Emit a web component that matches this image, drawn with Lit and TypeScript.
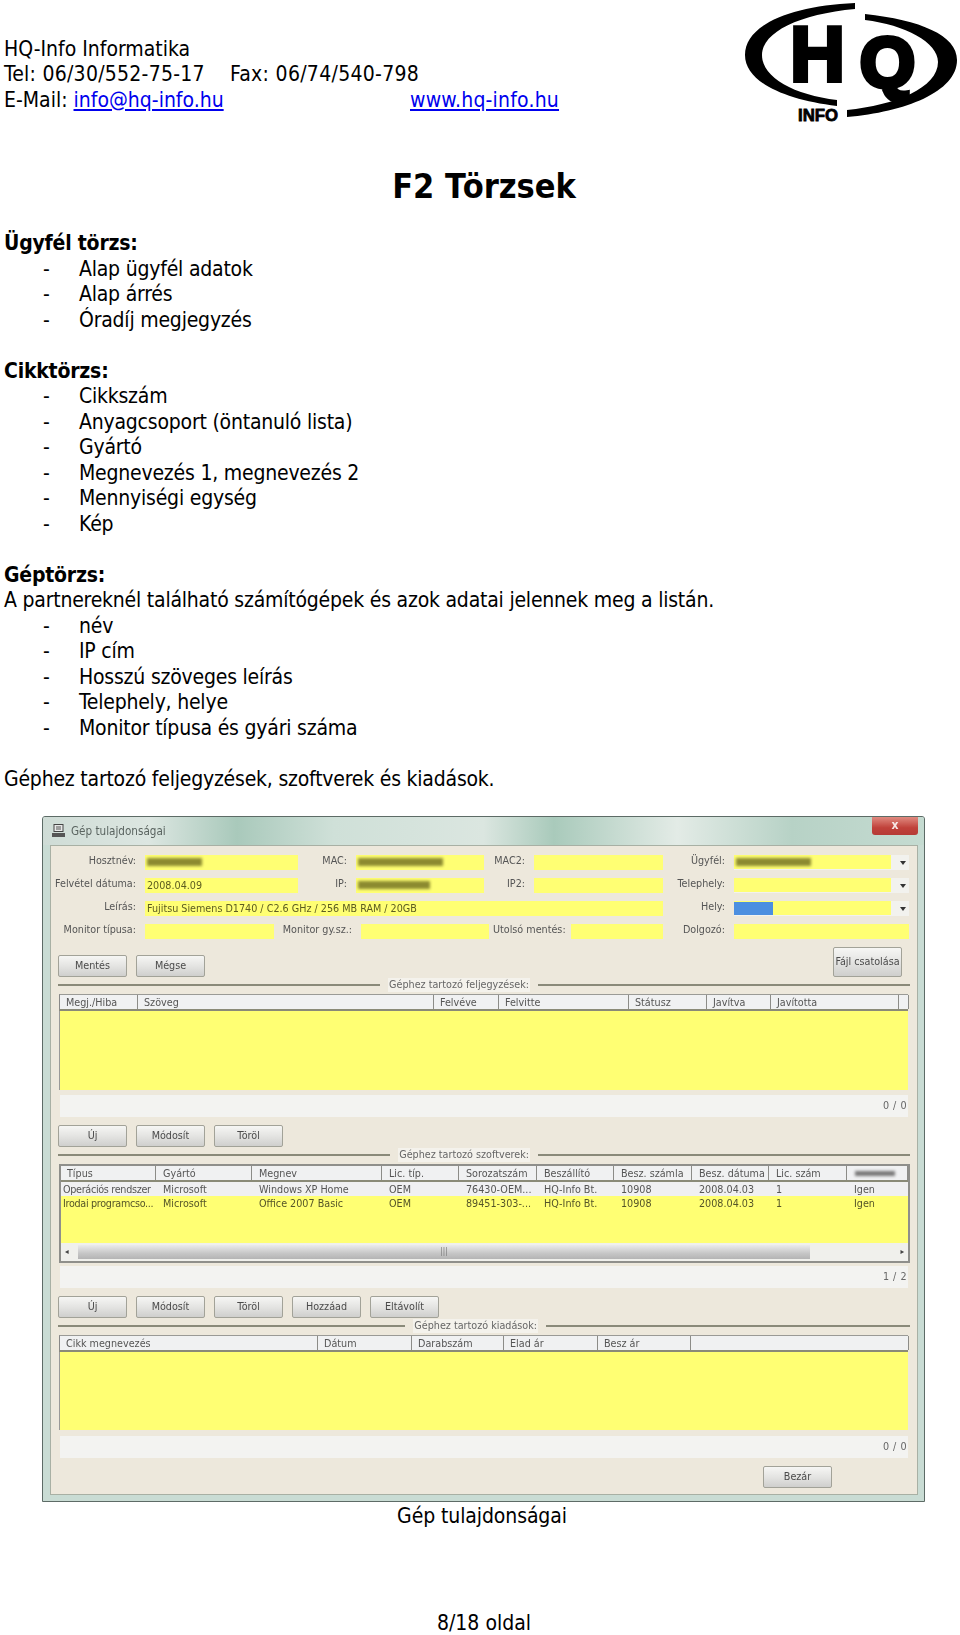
import { LitElement, html, css, nothing } from "lit";
import { customElement } from "lit/decorators.js";

const T1 = { widths: [78, 296, 65, 130, 78, 64, 128, 10], heads: ["Megj./Hiba", "Szöveg", "Felvéve", "Felvitte", "Státusz", "Javítva", "Javította", ""] };
const T2 = {
  widths: [95, 96, 130, 77, 78, 77, 78, 77, 78, 61],
  heads: ["Típus", "Gyártó", "Megnev", "Lic. típ.", "Sorozatszám", "Beszállító", "Besz. számla", "Besz. dátuma", "Lic. szám", ""],
  rows: [
    ["Operációs rendszer", "Microsoft", "Windows XP Home", "OEM", "76430-OEM...", "HQ-Info Bt.", "10908", "2008.04.03", "1", "Igen"],
    ["Irodai programcso...", "Microsoft", "Office 2007 Basic", "OEM", "89451-303-...", "HQ-Info Bt.", "10908", "2008.04.03", "1", "Igen"],
  ],
};
const T3 = { widths: [258, 94, 92, 94, 93, 218], heads: ["Cikk megnevezés", "Dátum", "Darabszám", "Elad ár", "Besz ár", ""] };

@customElement("app-root")
export class AppRoot extends LitElement {
  static styles = css`
    :host { display: block; width: 960px; height: 1635px; background: #fff; overflow: hidden;
      font-family: "DejaVu Sans Condensed", "DejaVu Sans", sans-serif; font-stretch: condensed; color: #000;
      font-size: 21px; line-height: 25.5px; }
    .head { display: flex; justify-content: space-between; align-items: flex-start; height: 124px; }
    .contact { padding: 36.5px 0 0 4px; }
    .cl { display: flex; white-space: pre; }
    .c1 { width: 226px; letter-spacing: .25px; }
    .c2 { width: 406px; }
    .num { letter-spacing: .3px; }
    a { color: #0000ee; text-decoration: underline; }
    .www { letter-spacing: .2px; }
    .logo { display: block; width: 215px; height: 122px; margin: 2px 1px 0 0; }
    h1 { margin: 42px 0 25px; padding-left: 8px; text-align: center; font-size: 34px; line-height: 40px; font-weight: 700; }
    .doc { padding-left: 4px; letter-spacing: -.21px; }
    .blank { height: 25.5px; }
    b { font-weight: 700; display: block; }
    .li { display: flex; padding-left: 39px; }
    .li span:first-child { width: 36px; }
    .win { box-sizing: border-box; margin: 24px 0 0 42px; width: 883px; height: 686px; display: flex; flex-direction: column;
      background: #c9dcd4; border: 1px solid #5d6b66; border-radius: 3px 3px 0 0; position: relative; filter: blur(0.6px); overflow: hidden;
      font-size: 10.7px; line-height: 14px; color: #555; }
    .title { height: 28px; flex: none; display: flex; align-items: center; gap: 5px; padding-left: 8px; box-sizing: border-box; font-size: 11.6px; color: #5a6460;
      background: linear-gradient(90deg, #cfdcd6 0%, #dce6e1 12%, #a9c9bb 22%, #cfe0d8 33%, #dbe6e0 50%, #a9cabb 58%, #e3ebe6 72%, #b7d2c6 85%, #c5dbd1 100%); }
    .close { position: absolute; right: 6px; top: 0; width: 46px; height: 18px; border-radius: 0 0 3px 3px; background: linear-gradient(#e08a80, #c0413a 60%, #b53a36);
      color: #f6e8e6; font-size: 12px; line-height: 16px; text-align: center; font-weight: 700; }
    .body { flex: 1; margin: 0 6px 6px 7px; background: #ede8dc; border: 1px solid #a8b0a4; box-sizing: border-box; display: flex; flex-direction: column; }
    .form { display: grid; row-gap: 8px; margin-top: 9px; grid-auto-rows: 15px; }
    .r { display: grid; column-gap: 4px; align-items: center; }
    .ra { grid-template-columns: 90px 153px 50px 128px 42px 129px 63px 175px; }
    .rb { grid-template-columns: 90px 518px 63px 175px; }
    .rc { grid-template-columns: 90px 129px 79px 128px 74px 92px 63px 175px; }
    .lb { text-align: right; white-space: nowrap; align-self: start; line-height: 12px; padding-right: 5px; box-sizing: border-box; direction: rtl; unicode-bidi: plaintext; }
    .in { height: 15px; background: #ffff73; color: #5c5c20; padding-left: 2px; line-height: 15px; white-space: nowrap; overflow: hidden; box-sizing: border-box; }
    .combo { display: flex; background: #f2f2ee; height: 15px; position: relative; }
    .combo i { display: block; width: 157px; height: 14px; background: #ffff73; }
    .arrow { position: absolute; right: 3px; top: 6px; width: 0; height: 0; border: 3px solid transparent; border-top: 4px solid #333; }
    .sm { position: absolute; left: 2px; top: 3px; height: 8px; filter: blur(1.6px); }
    .cell { position: relative; }
    .olive { background: #8c8a30; }
    .blue { left: 0; top: 1px; height: 13px; background: #4c8fe0; filter: blur(.6px); }
    .w75 { width: 75px; }
    .w39 { width: 39px; }
    .w55 { width: 55px; }
    .w85 { width: 85px; }
    .w75b { width: 72px; }
    .th .gray { background: #777; left: 8px; top: 5px; height: 5px; width: 40px; padding: 0; border: 0; }
    .btns { display: flex; gap: 9px; align-items: flex-end; margin: 0 0 0 7px; }
    .top { margin-top: 8px; margin-right: 15px; height: 30px; }
    .b { width: 69px; height: 22px; box-sizing: border-box; border: 1px solid #a2a298; border-radius: 2px; background: linear-gradient(#f6f6f4, #e4e4e2 50%, #cfcfcd);
      display: flex; align-items: center; justify-content: center; color: #4a4a4a; white-space: nowrap; }
    .b.tall { height: 30px; margin-left: auto; }
    .sep { display: flex; align-items: center; height: 14px; margin: 1px 7px 0 7px; gap: 8px; }
    .sep s { display: block; height: 2px; background: #8a8a7a; flex: 1; }
    .sep span { background: #f4f2ec; padding: 0 1px; color: #666; white-space: nowrap; }
    .w372 { width: 372px; }
    .w364 { width: 364px; }
    .sep s.w372, .sep s.w364 { flex: none; }
    .tb { margin: 2px 9px 0 8px; }
    .th, .tr { display: grid; }
    .th { height: 17px; box-sizing: border-box; background: #f0f1f2; border-top: 1px solid #9a9a96; border-bottom: 2px solid #8a8a78; border-left: 1px solid #888; }
    .th > span { border-right: 1px solid #8c8c88; padding-left: 6px; line-height: 15px; white-space: nowrap; overflow: hidden; position: relative; }
    .y { background: #ffff73; border-left: 1px solid #999; box-sizing: border-box; }
    .y1 { height: 79px; }
    .y3 { height: 78px; }
    .t2 { border: 2px solid #8f8f8b; height: 99px; box-sizing: border-box; margin: 2px 7px 0 8px; display: flex; flex-direction: column; }
    .t2 .th { height: 16px; border-top: 0; border-left: 0; }
    .t2 .th > span { padding-left: 7px; }
    .t2 .th > span:first-child { padding-left: 6px; }
    .tr { height: 14px; line-height: 15px; color: #555528; white-space: nowrap; }
    .tr span { padding-left: 7px; }
    .tr span:first-child { padding-left: 2px; letter-spacing: -.3px; }
    .rw { background: #f0f0f2; }
    .rw.tr { color: #555; }
    .y2 { height: 47px; background: #ffff73; }
    .scroll { height: 18px; background: #f0f0ec; display: flex; align-items: center; padding: 0 4px; font-size: 8px; color: #444; }
    .scroll > span:first-child { width: 13px; }
    .thumb { width: 732px; height: 14px; background: linear-gradient(#ebebeb, #c6c6c6 60%, #b4b4b4); text-align: center; line-height: 13px; color: #777; }
    .thumb + span { margin-left: auto; }
    .st { display: grid; grid-template-columns: 1fr 26px; gap: 2px; height: 22px; margin: 5px 9px 0 9px; background: #f3f3f1; flex: none; }
    .st span:last-child { text-align: center; line-height: 22px; letter-spacing: .5px; color: #666; white-space: nowrap; }
    .st2 { margin-top: 3px; }
    .st3 { margin-top: 6px; }
    .sp { margin-top: 8px; }
    .bez { margin: 8px 85px 0 auto; }
    .cap { text-align: center; padding-left: 4px; margin-top: 2px; letter-spacing: -.1px; }
    .foot { text-align: center; padding-left: 8px; margin-top: 81px; }
    .ic { width: 15px; height: 14px; flex: none; }
  `;

  private smudge(cls: string) { return html`<span class="sm ${cls}"></span>`; }
  private combo(cls?: string) {
    return html`<div class="combo"><i></i>${cls ? html`<span class="sm ${cls}"></span>` : nothing}<span class="arrow"></span></div>`;
  }
  private head(t: { widths: number[]; heads: string[] }, blurLast = false) {
    return html`<div class="th" style="grid-template-columns:${t.widths.map((w) => w + "px").join(" ")}">
      ${t.heads.map((h, i) => html`<span>${h}${blurLast && i === t.heads.length - 1 ? html`<span class="sm gray"></span>` : nothing}</span>`)}
    </div>`;
  }
  private status(n: string, cls = "") { return html`<div class="st ${cls}"><span></span><span>${n}</span></div>`; }
  private btns(names: string[], cls = "sp") {
    return html`<div class="btns ${cls}">${names.map((n) => html`<div class="b">${n}</div>`)}</div>`;
  }

  render() {
    const cols2 = T2.widths.map((w) => w + "px").join(" ");
    return html`
      <div class="head">
        <div class="contact">
          <div class="cl">HQ-Info Informatika</div>
          <div class="cl"><span class="c1">Tel: 06/30/552-75-17</span><span class="num">Fax: 06/74/540-798</span></div>
          <div class="cl"><span class="c2">E-Mail: <a href="#">info@hq-info.hu</a></span><a class="www" href="#">www.hq-info.hu</a></div>
        </div>
        <svg class="logo" viewBox="744 2 215 122" aria-label="HQ Info">
          <path d="M855 3C790 6 745 25 745 55C745 82 785 100 837 106L837 100C795 95 762 78 762 55C762 32 800 14 855 9Z" />
          <path d="M865 14C920 20 957 35 957 60C957 92 905 112 847 117L847 110C895 105 938 88 938 62C938 42 905 25 865 20Z" />
          <text x="790" y="81" font-family="Liberation Sans" font-weight="700" font-size="77" textLength="55" lengthAdjust="spacingAndGlyphs" stroke="#000" stroke-width="4">H</text>
          <text x="860" y="87" font-family="Liberation Sans" font-weight="700" font-size="70" textLength="55" lengthAdjust="spacingAndGlyphs" stroke="#000" stroke-width="5">Q</text>
          <text x="798" y="121" font-family="Liberation Sans" font-weight="700" font-size="17" textLength="40" lengthAdjust="spacingAndGlyphs" stroke="#000" stroke-width=".8">INFO</text>
        </svg>
      </div>
      <h1>F2 Törzsek</h1>
      <div class="doc">
        <b>Ügyfél törzs:</b>
        ${["Alap ügyfél adatok", "Alap árrés", "Óradíj megjegyzés"].map((t) => html`<div class="li"><span>-</span><span>${t}</span></div>`)}
        <div class="blank"></div>
        <b>Cikktörzs:</b>
        ${["Cikkszám", "Anyagcsoport (öntanuló lista)", "Gyártó", "Megnevezés 1, megnevezés 2", "Mennyiségi egység", "Kép"].map((t) => html`<div class="li"><span>-</span><span>${t}</span></div>`)}
        <div class="blank"></div>
        <b>Géptörzs:</b>
        <div>A partnereknél található számítógépek és azok adatai jelennek meg a listán.</div>
        ${["név", "IP cím", "Hosszú szöveges leírás", "Telephely, helye", "Monitor típusa és gyári száma"].map((t) => html`<div class="li"><span>-</span><span>${t}</span></div>`)}
        <div class="blank"></div>
        <div>Géphez tartozó feljegyzések, szoftverek és kiadások.</div>
      </div>

      <div class="win">
        <div class="title">
          <svg class="ic" viewBox="0 0 15 14"><rect x="3" y="0.5" width="9" height="7" fill="#e8e8e8" stroke="#444"/><path d="M1 9h13v4H1z" fill="#555"/><path d="M5 3h5M5 5h5" stroke="#555"/></svg>
          <span>Gép tulajdonságai</span>
        </div>
        <div class="close">x</div>
        <div class="body">
          <div class="form">
            <div class="r ra">
              <span class="lb">Hosztnév:</span><div class="in cell">${this.smudge("olive w55")}</div>
              <span class="lb">MAC:</span><div class="in cell">${this.smudge("olive w85")}</div>
              <span class="lb">MAC2:</span><div class="in"></div>
              <span class="lb">Ügyfél:</span>${this.combo("olive w75")}
            </div>
            <div class="r ra">
              <span class="lb">Felvétel dátuma:</span><div class="in">2008.04.09</div>
              <span class="lb">IP:</span><div class="in cell">${this.smudge("olive w75b")}</div>
              <span class="lb">IP2:</span><div class="in"></div>
              <span class="lb">Telephely:</span>${this.combo()}
            </div>
            <div class="r rb">
              <span class="lb">Leírás:</span><div class="in">Fujitsu Siemens D1740 / C2.6 GHz / 256 MB RAM / 20GB</div>
              <span class="lb">Hely:</span>${this.combo("blue w39")}
            </div>
            <div class="r rc">
              <span class="lb">Monitor típusa:</span><div class="in"></div>
              <span class="lb">Monitor gy.sz.:</span><div class="in"></div>
              <span class="lb">Utolsó mentés:</span><div class="in"></div>
              <span class="lb">Dolgozó:</span><div class="in"></div>
            </div>
          </div>
          <div class="btns top"><div class="b">Mentés</div><div class="b">Mégse</div><div class="b tall">Fájl csatolása</div></div>
          <div class="sep"><s></s><span>Géphez tartozó feljegyzések:</span><s class="w372"></s></div>
          <div class="tb">${this.head(T1)}<div class="y y1"></div></div>
          ${this.status("0 / 0")}
          ${this.btns(["Új", "Módosít", "Töröl"])}
          <div class="sep"><s></s><span>Géphez tartozó szoftverek:</span><s class="w372"></s></div>
          <div class="t2">
            ${this.head(T2, true)}
            <div class="tr rw" style="grid-template-columns:${cols2}">${T2.rows[0].map((c) => html`<span>${c}</span>`)}</div>
            <div class="y2"><div class="tr" style="grid-template-columns:${cols2}">${T2.rows[1].map((c) => html`<span>${c}</span>`)}</div></div>
            <div class="scroll"><span>◂</span><div class="thumb">|||</div><span>▸</span></div>
          </div>
          ${this.status("1 / 2", "st2")}
          ${this.btns(["Új", "Módosít", "Töröl", "Hozzáad", "Eltávolít"])}
          <div class="sep"><s></s><span>Géphez tartozó kiadások:</span><s class="w364"></s></div>
          <div class="tb">${this.head(T3)}<div class="y y3"></div></div>
          ${this.status("0 / 0", "st3")}
          <div class="b bez">Bezár</div>
        </div>
      </div>
      <div class="cap">Gép tulajdonságai</div>
      <div class="foot">8/18 oldal</div>
    `;
  }
}
